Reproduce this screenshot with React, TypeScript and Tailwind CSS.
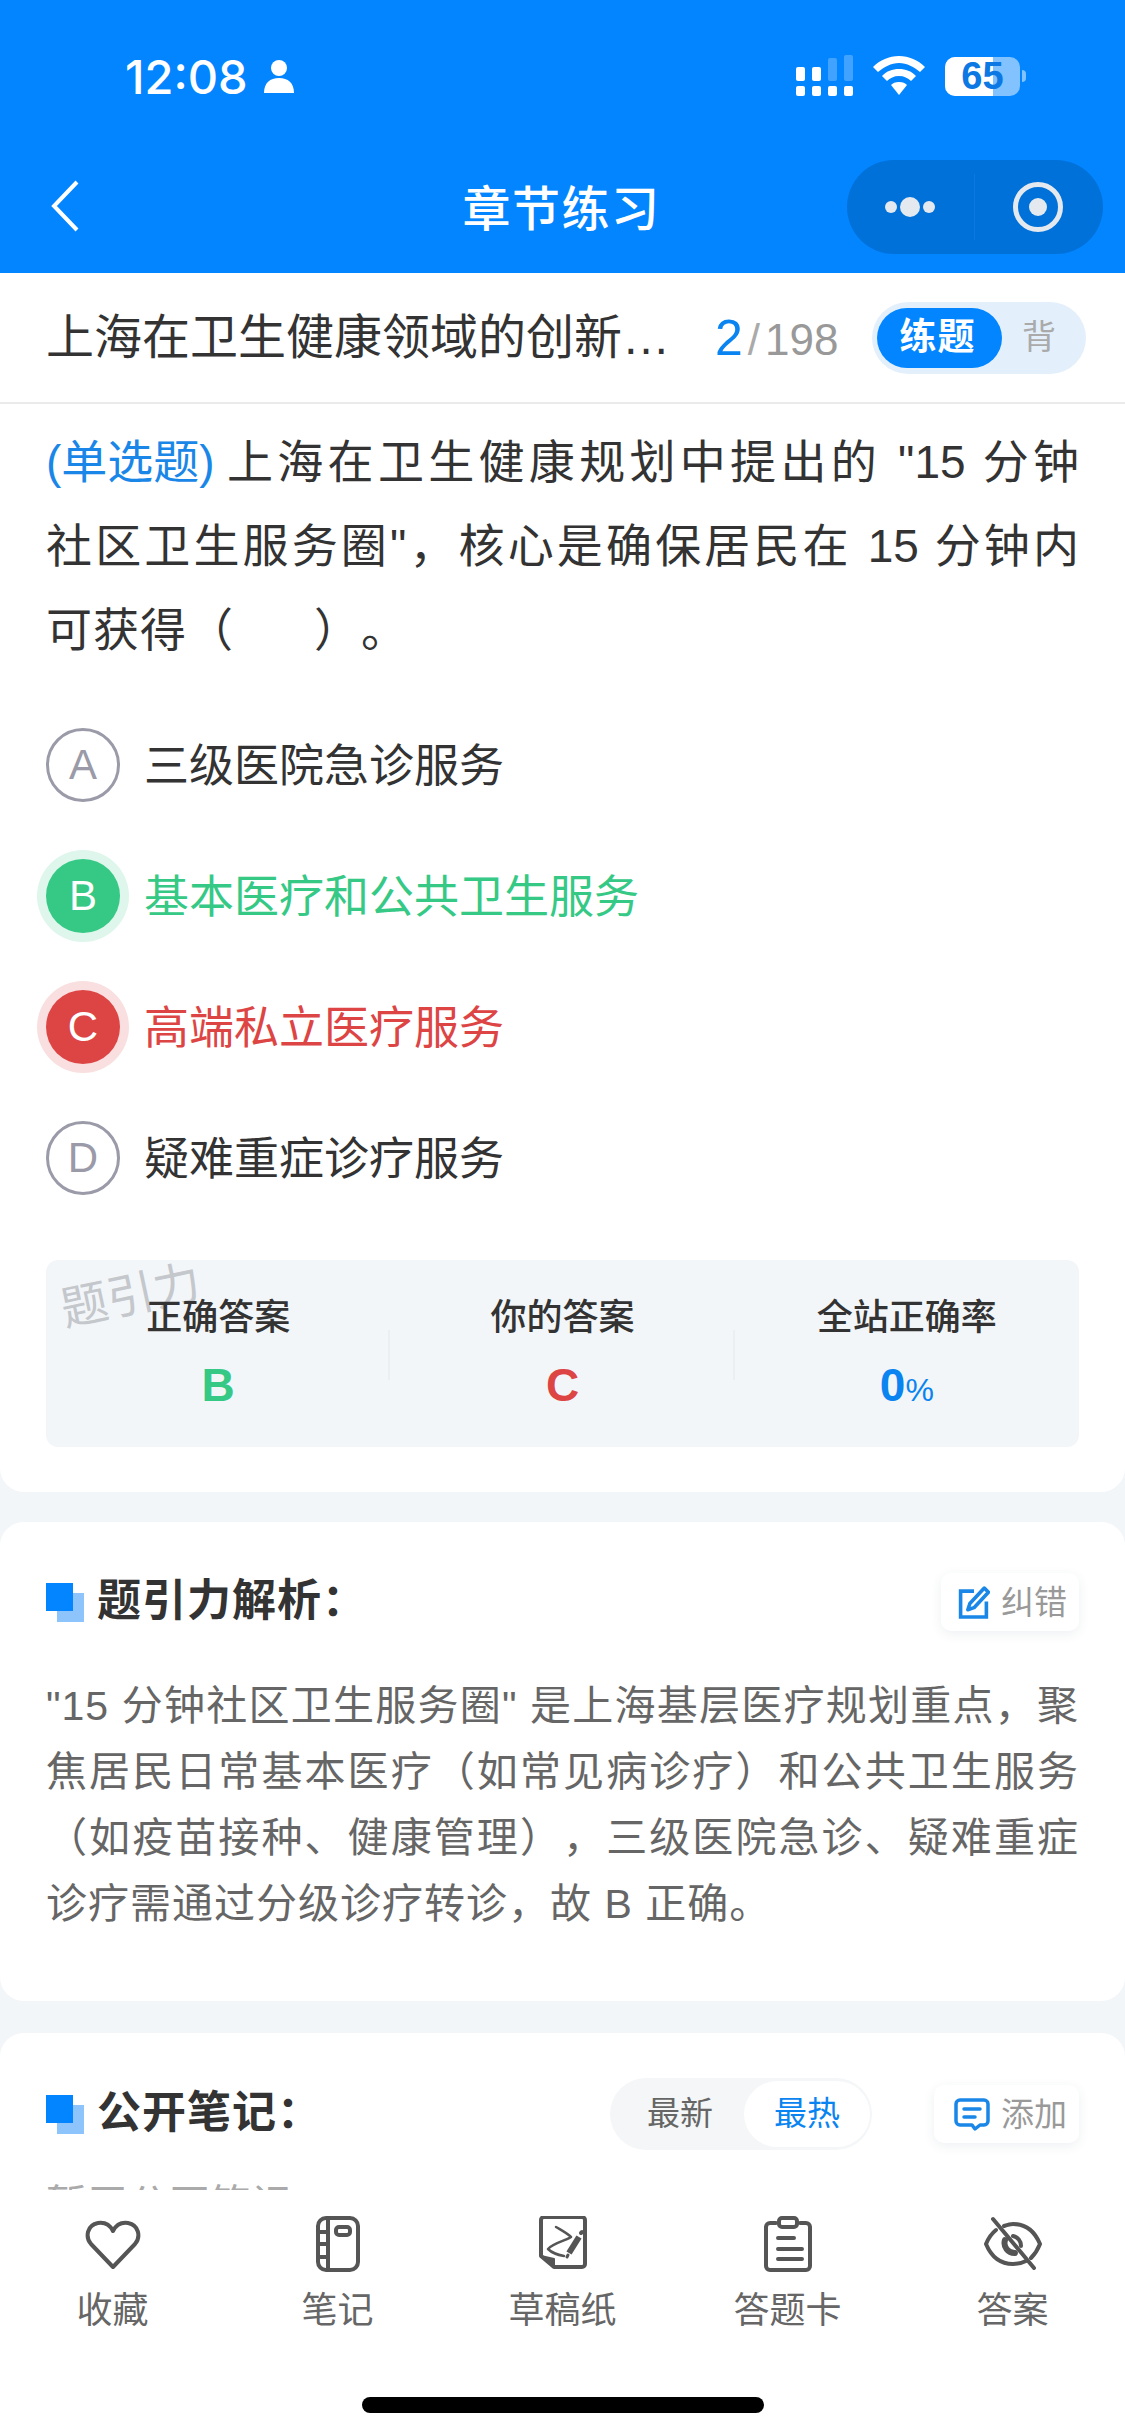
import React from "react";

const FONT = '"Liberation Sans", "Noto Sans CJK SC", sans-serif';

function StatusBar() {
  return (
    <div className="h-[147px] flex items-center justify-between pl-[125px] pr-[99px] pt-[5px]">
      <div className="flex items-center gap-[15px] text-white text-[47px] leading-none font-medium font-['Inter']">
        <span>12:08</span>
        <svg width="32" height="34" viewBox="0 0 32 34" fill="white">
          <circle cx="16" cy="9" r="8" />
          <path d="M1 34c0-10 6-15 15-15s15 5 15 15z" />
        </svg>
      </div>
      <div className="flex items-center">
        <svg width="60" height="42" viewBox="0 0 60 42" fill="white" className="mr-[18px]">
          <rect x="1" y="12" width="9" height="14" rx="2" />
          <rect x="17" y="12" width="9" height="14" rx="2" />
          <rect x="33" y="3" width="9" height="23" rx="2" opacity="0.25" />
          <rect x="49" y="0" width="9" height="26" rx="2" opacity="0.25" />
          <rect x="1" y="31" width="9" height="10" rx="2" />
          <rect x="17" y="31" width="9" height="10" rx="2" />
          <rect x="33" y="31" width="9" height="10" rx="2" />
          <rect x="49" y="31" width="9" height="10" rx="2" />
        </svg>
        <svg width="52" height="40" viewBox="0 0 52 40" fill="white" className="mr-[20px]">
          <path d="M26 0C16 0 7 4 0 11l5 5c6-5 13-9 21-9s15 4 21 9l5-5C45 4 36 0 26 0z" />
          <path d="M26 13c-7 0-12 2-17 7l5 5c3-3 7-5 12-5s9 2 12 5l5-5c-5-5-10-7-17-7z" />
          <path d="M26 26c-4 0-6 1-8 3l8 10 8-10c-2-2-4-3-8-3z" />
        </svg>
        <div className="relative w-[75px] h-[39px] rounded-[10px] bg-white/50 overflow-hidden">
          <div className="w-[48px] h-full bg-white" />
          <div className="absolute inset-0 flex items-center justify-center font-bold text-[#0b78e3] text-[38px] leading-none">65</div>
        </div>
        <div className="w-[4px] h-[12px] ml-[2px] rounded-r-full bg-white/50" />
      </div>
    </div>
  );
}

function NavBar() {
  return (
    <div className="relative h-[126px] flex items-center justify-center">
      <svg className="absolute left-[50px] top-[33px]" width="30" height="52" viewBox="0 0 30 52" fill="none" stroke="white" strokeWidth="4">
        <path d="M27 2 4 26l23 24" />
      </svg>
      <div className="text-white text-[48px] leading-none font-medium tracking-[1.5px] -ml-[2px]">章节练习</div>
      <div className="absolute left-[847px] top-[13px] w-[256px] h-[94px] rounded-full bg-[#0071d9] flex items-center">
        <div className="w-[128px] h-[66px] border-r border-[#0a79e0] flex items-center justify-center gap-[3px] pr-[2px]">
          <span className="w-[12px] h-[12px] rounded-full bg-[#e4e9ef]" />
          <span className="w-[20px] h-[20px] rounded-full bg-[#e4e9ef]" />
          <span className="w-[12px] h-[12px] rounded-full bg-[#e4e9ef]" />
        </div>
        <div className="flex-1 flex items-center justify-center pr-[2px]">
          <div className="w-[50px] h-[50px] rounded-full border-[5px] border-[#e4e9ef] flex items-center justify-center">
            <span className="w-[18px] h-[18px] rounded-full bg-[#e4e9ef]" />
          </div>
        </div>
      </div>
    </div>
  );
}

function TitleRow() {
  return (
    <div className="h-[131px] border-b-2 border-[#eaeaea] flex items-center pl-[46px] bg-white">
      <div className="w-[626px] truncate text-[48px] leading-[60px] text-[#333] pt-[1px]">上海在卫生健康领域的创新发展方向</div>
      <div className="ml-[43px] w-[128px] flex items-baseline">
        <span className="text-[#0a84f0] text-[50px] leading-none">2</span>
        <span className="text-[#aaa] text-[44px] leading-none ml-[5px]">/</span>
        <span className="text-[#999] text-[44px] leading-none ml-[5px]">198</span>
      </div>
      <div className="ml-[29px] w-[214px] h-[72px] rounded-full bg-[#e3f0fc] flex items-center pl-[5px] overflow-hidden">
        <div className="w-[125px] h-[60px] rounded-full bg-[#0285ff] text-white text-[37px] font-bold flex items-center justify-center tracking-[1px] pr-[4px]">练题</div>
        <div className="ml-[20px] text-[#aaa] text-[34px]">背</div>
      </div>
    </div>
  );
}

function OptionRow({ letter, text, state }: { letter: string; text: string; state?: "right" | "wrong" }) {
  const circle =
    state === "right"
      ? "bg-[#35c985] text-white shadow-[0_0_0_9px_#def6eb]"
      : state === "wrong"
        ? "bg-[#dd4545] text-white shadow-[0_0_0_9px_#f9dfdf]"
        : "border-[3px] border-[#9a9aa8] text-[#9a9aa8]";
  const color = state === "right" ? "text-[#35c985]" : state === "wrong" ? "text-[#dd4545]" : "text-[#333]";
  return (
    <div className="h-[131px] flex items-center">
      <div className={`w-[74px] h-[74px] rounded-full flex items-center justify-center text-[42px] leading-none ${circle}`}>{letter}</div>
      <div className={`ml-[24px] pt-[3px] text-[45px] leading-none ${color}`}>{text}</div>
    </div>
  );
}

function Stat({ label, children, divider }: { label: string; children: React.ReactNode; divider?: boolean }) {
  return (
    <div className="relative flex-1 flex flex-col items-center pt-[37px]">
      <div className="text-[36px] leading-[42px] font-medium text-[#333]">{label}</div>
      <div className="mt-[21px] h-[50px] flex items-baseline">{children}</div>
      {divider && <div className="absolute right-0 top-[70px] h-[50px] w-[2px] bg-[#eceff2]" />}
    </div>
  );
}

function Heading({ children }: { children: React.ReactNode }) {
  return (
    <div className="flex items-center">
      <div className="relative w-[38px] h-[39px]">
        <div className="absolute right-0 bottom-0 w-[27px] h-[29px] bg-[#8cc4fb]" />
        <div className="absolute left-0 top-0 w-[27px] h-[28px] bg-[#0285ff]" />
      </div>
      <div className="ml-[13px] -mt-[2px] text-[44px] leading-[60px] font-bold text-[#333] tracking-[1px]">{children}</div>
    </div>
  );
}

function SmallButton({ icon, label, width }: { icon: React.ReactNode; label: string; width: string }) {
  return (
    <div className={`h-[58px] ${width} rounded-[10px] bg-white shadow-[0_3px_12px_rgba(40,60,90,0.08)] flex items-center justify-end gap-[11px] pr-[12px]`}>
      {icon}
      <span className="text-[33px] leading-none text-[#999]">{label}</span>
    </div>
  );
}

const tabIcon = { fill: "none", stroke: "#555", strokeWidth: 4, strokeLinecap: "round", strokeLinejoin: "round" } as const;

function TabBar() {
  const items: { label: string; icon: React.ReactNode }[] = [
    {
      label: "收藏",
      icon: (
        <svg width="56" height="56" viewBox="0 0 56 56" {...tabIcon}>
          <path d="M28 51 6 28C0 21 2 9 13 7c7-1 12 2 15 8 3-6 8-9 15-8 11 2 13 14 7 21z" />
        </svg>
      ),
    },
    {
      label: "笔记",
      icon: (
        <svg width="56" height="56" viewBox="0 0 56 56" {...tabIcon}>
          <rect x="8" y="2" width="40" height="52" rx="8" />
          <path d="M18 3v50" />
          <path d="M8 16h10M8 28h10M8 41h10" />
          <rect x="26" y="11" width="14" height="8" rx="3" />
        </svg>
      ),
    },
    {
      label: "草稿纸",
      icon: (
        <svg width="56" height="56" viewBox="0 0 56 56" {...tabIcon}>
          <path d="M9 1h38a3 3 0 0 1 3 3v44a3 3 0 0 1-3 3H19L6 40V4a3 3 0 0 1 3-3z" />
          <path d="M6 40l13 3v8z" fill="#555" strokeWidth="2" />
          <path d="M21 11c5 3 11 6 15 10-6 4-18 6-23 12 4 4 10 6 16 7" strokeWidth="2.5" />
          <path d="M44 21 34 37" strokeWidth="6" strokeLinecap="butt" />
          <path d="M33 39l-1 2" strokeWidth="3" />
          <path d="M46 17l1-1" strokeWidth="4" />
        </svg>
      ),
    },
    {
      label: "答题卡",
      icon: (
        <svg width="56" height="56" viewBox="0 0 56 56" {...tabIcon}>
          <path d="M16 7H10a4 4 0 0 0-4 4v39a4 4 0 0 0 4 4h36a4 4 0 0 0 4-4V11a4 4 0 0 0-4-4h-6" />
          <rect x="19" y="2" width="18" height="9" rx="3" />
          <path d="M18 22h16M18 33h24M18 43h24" />
        </svg>
      ),
    },
    {
      label: "答案",
      icon: (
        <svg width="58" height="56" viewBox="0 0 58 56" {...tabIcon}>
          <path d="M12 14C7 18 4 23 2 28c5 12 14 20 27 20 5 0 9-1 13-3" />
          <path d="M20 10c3-1 6-2 9-2 13 0 22 8 27 20-2 5-5 10-9 14" />
          <path d="M9 3l41 49" />
          <path d="M21 24a10 10 0 0 0 10 13" strokeWidth="6" />
          <path d="M29 20a10 10 0 0 1 8 10" strokeWidth="4" />
        </svg>
      ),
    },
  ];
  return (
    <div className="relative h-[246px] bg-white flex items-start pt-[26px]">
      {items.map((it) => (
        <div key={it.label} className="flex-1 flex flex-col items-center">
          <div className="h-[56px] flex items-center">{it.icon}</div>
          <div className="mt-[17px] text-[36px] leading-[44px] text-[#666]">{it.label}</div>
        </div>
      ))}
      <div className="absolute left-[362px] top-[207px] w-[402px] h-[16px] rounded-full bg-black" />
    </div>
  );
}

const fullLine = "block [text-align-last:justify]";

export default function App() {
  return (
    <div className="w-[1125px] h-[2436px] flex flex-col overflow-hidden bg-[#f3f6f9] [text-spacing-trim:space-all]" style={{ fontFamily: FONT }}>
      <div className="bg-[#0285ff] h-[273px]">
        <StatusBar />
        <NavBar />
      </div>
      <TitleRow />
      <div className="flex-1 overflow-hidden">
        <div className="bg-white rounded-b-[24px] px-[46px] pt-[16px] pb-[45px]">
          <p className="text-[46px] leading-[84px] text-[#333]">
            <span className={fullLine}>
              <span className="inline-block text-[#1a87e8] mr-[8px]">(单选题)</span>上海在卫生健康规划中提出的 "15 分钟
            </span>
            <span className={fullLine}>社区卫生服务圈"，核心是确保居民在 15 分钟内</span>
            <span className="block tracking-[1px]">
              可获得（<span className="inline-block w-[80px]" />）。
            </span>
          </p>
          <div className="mt-[27px]">
            <OptionRow letter="A" text="三级医院急诊服务" />
            <OptionRow letter="B" text="基本医疗和公共卫生服务" state="right" />
            <OptionRow letter="C" text="高端私立医疗服务" state="wrong" />
            <OptionRow letter="D" text="疑难重症诊疗服务" />
          </div>
          <div className="relative mt-[37px] h-[187px] rounded-[12px] bg-[#f3f6f9] flex">
            <div className="absolute left-[14px] top-[12px] -rotate-[12deg] text-[47px] leading-none text-[#c4c7cb]">题引力</div>
            <Stat label="正确答案" divider>
              <span className="text-[46px] leading-[50px] font-bold text-[#35c985]">B</span>
            </Stat>
            <Stat label="你的答案" divider>
              <span className="text-[46px] leading-[50px] font-bold text-[#dd4545]">C</span>
            </Stat>
            <Stat label="全站正确率">
              <span className="text-[46px] leading-[50px] font-bold text-[#0a84f0]">0</span>
              <span className="text-[32px] leading-[50px] text-[#0a84f0]">%</span>
            </Stat>
          </div>
        </div>

        <div className="mt-[30px] bg-white rounded-[24px] px-[46px] pt-[50px] pb-[64px]">
          <div className="flex items-center justify-between h-[60px]">
            <Heading>题引力解析：</Heading>
            <SmallButton
              width="w-[138px]"
              label="纠错"
              icon={
                <svg width="32" height="33" viewBox="0 0 30 32" fill="none" stroke="#1a87e8" strokeWidth="3.5">
                  <path d="M15 5H2v25h25V15" />
                  <path d="M25 2l4 4-14 15-6 2 2-6z" strokeLinejoin="round" />
                </svg>
              }
            />
          </div>
          <p className="mt-[41px] text-[41px] leading-[66px] text-[#666] tracking-[1px]">
            <span className={fullLine}>"15 分钟社区卫生服务圈" 是上海基层医疗规划重点，聚</span>
            <span className={fullLine}>焦居民日常基本医疗（如常见病诊疗）和公共卫生服务</span>
            <span className={fullLine}>（如疫苗接种、健康管理），三级医院急诊、疑难重症</span>
            <span className="block">诊疗需通过分级诊疗转诊，故 B 正确。</span>
          </p>
        </div>

        <div className="mt-[32px] bg-white rounded-t-[24px] px-[46px] pt-[45px]">
          <div className="flex items-center h-[72px]">
            <Heading>公开笔记：</Heading>
            <div className="ml-auto w-[262px] h-[72px] rounded-full bg-[#f4f6f8] flex items-center text-[33px] pl-[6px]">
              <div className="w-[128px] text-center text-[#666]">最新</div>
              <div className="w-[126px] h-[66px] rounded-full bg-white text-[#0a84f0] flex items-center justify-center">最热</div>
            </div>
            <div className="ml-[62px]">
              <SmallButton
                width="w-[145px]"
                label="添加"
                icon={
                  <svg width="36" height="33" viewBox="0 0 36 33" fill="none" stroke="#1a87e8" strokeWidth="3.5" strokeLinecap="round" strokeLinejoin="round">
                    <path d="M6 2h24a4 4 0 0 1 4 4v17a4 4 0 0 1-4 4h-4l-5 4-3-4H6a4 4 0 0 1-4-4V6a4 4 0 0 1 4-4z" />
                    <path d="M10 11h16M10 19h11" />
                  </svg>
                }
              />
            </div>
          </div>
          <div className="mt-[30px] text-[41px] leading-[50px] text-[#aaa]">暂无公开笔记</div>
        </div>
      </div>
      <TabBar />
    </div>
  );
}
